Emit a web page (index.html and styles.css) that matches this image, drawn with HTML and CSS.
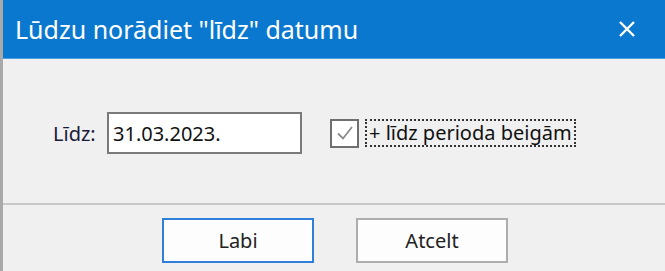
FILE: index.html
```html
<!DOCTYPE html>
<html>
<head>
<meta charset="utf-8">
<link rel="stylesheet" href="styles.css">
</head>
<body>
<div class="window">
  <div class="titlebar">
    <span class="title">Lūdzu norādiet "līdz" datumu</span>
    <svg class="close" width="18" height="18" viewBox="0 0 18 18"><path d="M2 2 L16 16 M16 2 L2 16" stroke="#fff" stroke-width="2.4" fill="none"/></svg>
  </div>
  <div class="content">
    <span class="label">Līdz:</span>
    <div class="input">31.03.2023.</div>
    <div class="check">
      <div class="box"><svg width="22" height="22" viewBox="0 0 22 22"><path d="M4 11.5 L9 16.5 L18 5" stroke="#8a8a8a" stroke-width="1.8" fill="none"/></svg></div>
      <span class="checklabel">+ līdz perioda beigām</span>
    </div>
  </div>
  <div class="footer">
    <div class="btn default">Labi</div>
    <div class="btn">Atcelt</div>
  </div>
</div>
</body>
</html>
```
FILE: styles.css
```css
html, body { margin: 0; padding: 0; }
body { width: 665px; height: 271px; overflow: hidden; background: #f0f0f0; font-family: "Noto Sans", "Open Sans", sans-serif; }
.window { height: 271px; display: flex; flex-direction: column; border-left: 3px solid #a9a9a9; box-sizing: border-box; }
.titlebar { height: 58px; background: #0a78cf; color: #fff; display: flex; align-items: center; justify-content: space-between; padding: 0 29px 0 12px; border-bottom: 1px solid #4aa0e0; flex: none; }
.title { font-size: 25px; }
.close { display: block; }
.content { flex: 1; display: flex; align-items: center; padding-left: 50px; padding-top: 4px; border-bottom: 2px solid #c8c8c8; }
.label { font-size: 20px; color: #1a1a3a; width: 54px; }
.input { width: 187px; height: 38px; border: 2px solid #7a7a7a; background: #fff; box-sizing: content-box; font-size: 20px; color: #111; display: flex; align-items: center; padding-left: 4px; margin-right: 28px; }
.check { display: flex; align-items: center; }
.box { width: 25px; height: 25px; border: 2px solid #6f6f6f; background: #fff; display: flex; align-items: center; justify-content: center; }
.checklabel { margin-left: 6px; font-size: 20px; line-height: 24px; color: #111; border: 2px dotted #333; padding: 0 2px; }
.footer { height: 66px; flex: none; display: flex; padding: 13px 0 0 159px; box-sizing: border-box; gap: 42px; }
.btn { width: 148px; height: 41px; border: 2px solid #adadad; background: #fdfdfd; display: flex; align-items: center; justify-content: center; font-size: 20px; color: #222; }
.btn.default { border-color: #2f7fd8; }
```
